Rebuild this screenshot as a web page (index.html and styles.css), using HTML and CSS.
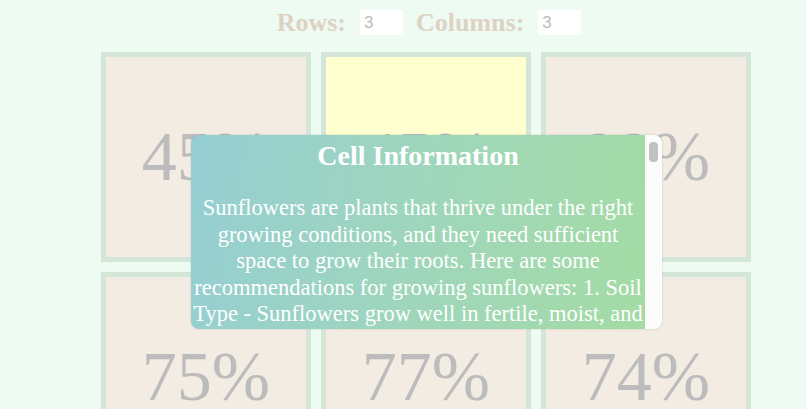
FILE: index.html
```html
<!DOCTYPE html>
<html lang="en">
<head>
<meta charset="utf-8">
<title>Sunflower Grid</title>
<link rel="stylesheet" href="styles.css">
</head>
<body>
<div class="page">
  <div class="controls">
    <label class="control">Rows: <input class="num" type="text" value="3"></label>
    <label class="control">Columns: <input class="num" type="text" value="3"></label>
  </div>
  <div class="grid">
    <div class="cell">45%</div>
    <div class="cell cell-active">45%</div>
    <div class="cell">99%</div>
    <div class="cell">75%</div>
    <div class="cell">77%</div>
    <div class="cell">74%</div>
    <div class="cell">68%</div>
    <div class="cell">52%</div>
    <div class="cell">81%</div>
  </div>
</div>
<div class="modal">
  <div class="modal-body">
    <h2 class="modal-title">Cell Information</h2>
    <p class="modal-text">Sunflowers are plants that thrive under the right growing conditions, and they need sufficient space to grow their roots. Here are some recommendations for growing sunflowers: 1. Soil Type - Sunflowers grow well in fertile, moist, and well-drained soil. A loose, loamy soil rich in organic matter gives the roots room to spread and anchor the tall stems. 2. Sunlight - Sunflowers need full sun, at least six to eight hours of direct light every day.</p>
  </div>
  <div class="scrollbar"><div class="thumb"></div></div>
</div>
</body>
</html>
```

FILE: styles.css
```css
html, body {
  margin: 0;
  padding: 0;
}

body {
  background: #eefbf2;
  font-family: "Liberation Serif", "Times New Roman", serif;
  height: 409px;
  overflow: hidden;
}

.page {
  width: 650px;
  margin-left: 101px;
}

.controls {
  display: flex;
  justify-content: center;
  align-items: center;
  gap: 13px;
  padding: 10px 0 0 6px;
  height: 25px;
}

.control {
  font-size: 26px;
  font-weight: bold;
  color: #ddd2c3;
  display: flex;
  align-items: center;
  gap: 14px;
}

.num {
  width: 43px;
  height: 25px;
  box-sizing: border-box;
  border: none;
  background: #ffffff;
  padding: 0 0 0 4px;
  font-family: "Liberation Sans", Arial, sans-serif;
  font-size: 17px;
  color: #bcbcbc;
  outline: none;
}

.grid {
  display: grid;
  grid-template-columns: repeat(3, 210px);
  grid-auto-rows: 210px;
  gap: 10px;
  margin-top: 17px;
}

.cell {
  box-sizing: border-box;
  border: 5px solid #d3e6d8;
  background: #f3ece3;
  display: flex;
  align-items: center;
  justify-content: center;
  font-size: 70px;
  color: #bcbcbc;
}

.cell-active {
  background: #ffffd0;
}

.modal {
  position: absolute;
  left: 191px;
  top: 135px;
  width: 471px;
  height: 194px;
  display: flex;
  border-radius: 8px;
  overflow: hidden;
  background: linear-gradient(100deg, #95ced3 0%, #9fd6bb 50%, #a4dca2 100%);
  color: #ffffff;
  box-shadow: 0 0 2px rgba(0, 0, 0, 0.2);
  text-align: center;
}

.modal-body {
  flex: 1;
  overflow: hidden;
}

.scrollbar {
  width: 17px;
  flex: none;
  box-sizing: border-box;
  background: #fcfcfc;
  padding: 7px 4px 0;
}

.thumb {
  height: 20px;
  background: #c1c1c1;
  border-radius: 4px;
}

.modal-title {
  font-size: 28px;
  font-weight: bold;
  margin: 6px 0 24px;
  line-height: 30px;
}

.modal-text {
  font-size: 22.5px;
  line-height: 26.5px;
  margin: 0;
  padding: 0 1px;
}
```
